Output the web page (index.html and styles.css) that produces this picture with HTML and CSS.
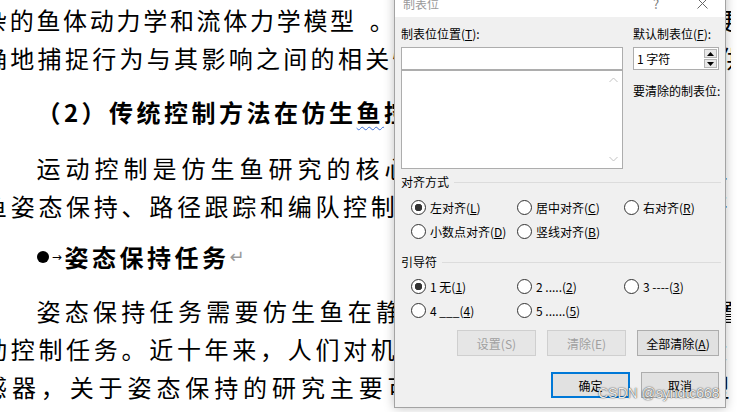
FILE: index.html
```html
<!DOCTYPE html>
<html lang="zh-CN">

<head>
    <meta charset="UTF-8">
    <meta name="viewport" content="width=device-width, initial-scale=1.0">

    <title>制表位</title>
    <link rel="stylesheet" href="styles.css">
</head>

<body>

    <main class="doc">

        <p class="para">
            <span class="line ls-a">杂的鱼体动力学和流体力学模型<span class="stop">。</span>此外，数据驱动的方法能够更准</span>
            <span class="line ls-b">确地捕捉行为与其影响之间的相关性，从而为仿生鱼的设计提供</span>
        </p>

        <h2 class="heading">（2）传统控制方法在仿生<span class="wavy">鱼</span>控制中的应用</h2>

        <p class="para p2">
            <span class="line lead ls-c">运动控制是仿生鱼研究的核心问题之一，主要包括仿生</span>
            <span class="line ls-d">鱼姿态保持、路径跟踪和编队控制等任务。针对这些任务，研究者</span>
        </p>

        <h2 class="heading bullet-line"><span class="bullet"></span><span class="tab">→</span>姿态保持任务<span class="mark">↵</span></h2>

        <p class="para p3">
            <span class="line lead ls-e">姿态保持任务需要仿生鱼在静水或流场中保持期望的位置和姿</span>
            <span class="line ls-d">动控制任务。近十年来，人们对机器鱼姿态保持问题进行了大量研</span>
            <span class="line ls-f">感器，关于姿态保持的研究主要可以分为基于模型和无模型两类方法</span>
        </p>

    </main>

    <!-- tab stops dialog -->
    <div class="dialog">

        <div class="titlebar">
            <span class="title">制表位</span>
            <span class="cap-btn">?</span>
            <span class="cap-btn">
                <svg width="11" height="11" viewBox="0 0 11 11">
                    <path d="M0.5 0.5 L10.5 10.5 M10.5 0.5 L0.5 10.5" stroke="#666" stroke-width="1" fill="none" />
                </svg>
            </span>
        </div>

        <div class="dlg-body">

            <div class="top-row">
                <div class="col-left">
                    <div class="field-label">制表位位置(<u>T</u>):</div>
                    <div class="text-input"></div>
                    <div class="listbox">
                        <div class="list-scroll">
                            <svg width="9" height="6" viewBox="0 0 9 6">
                                <path d="M0.5 5 L4.5 1 L8.5 5" stroke="#c2c2c2" fill="none" />
                            </svg>
                            <svg width="9" height="6" viewBox="0 0 9 6">
                                <path d="M0.5 1 L4.5 5 L8.5 1" stroke="#c2c2c2" fill="none" />
                            </svg>
                        </div>
                    </div>
                </div>

                <div class="col-right">
                    <div class="field-label">默认制表位(<u>F</u>):</div>
                    <div class="spin">
                        <span>1 字符</span>
                        <div class="spin-btns">
                            <span class="spin-btn">
                                <svg width="7" height="4" viewBox="0 0 7 4"><path d="M0 4 L3.5 0 L7 4 Z" fill="#000" /></svg>
                            </span>
                            <span class="spin-btn">
                                <svg width="7" height="4" viewBox="0 0 7 4"><path d="M0 0 L3.5 4 L7 0 Z" fill="#000" /></svg>
                            </span>
                        </div>
                    </div>
                    <div class="clear-label">要清除的制表位:</div>
                </div>
            </div>

            <div class="group">
                <div class="group-head">对齐方式</div>
                <div class="radio-grid">
                    <span class="radio on"><span>左对齐(<u>L</u>)</span></span>
                    <span class="radio"><span>居中对齐(<u>C</u>)</span></span>
                    <span class="radio"><span>右对齐(<u>R</u>)</span></span>
                    <span class="radio"><span>小数点对齐(<u>D</u>)</span></span>
                    <span class="radio"><span>竖线对齐(<u>B</u>)</span></span>
                </div>
            </div>

            <div class="group group-leader">
                <div class="group-head">引导符</div>
                <div class="radio-grid">
                    <span class="radio on"><span>1 无(<u>1</u>)</span></span>
                    <span class="radio"><span>2 .....(<u>2</u>)</span></span>
                    <span class="radio"><span>3 ----(<u>3</u>)</span></span>
                    <span class="radio"><span>4 ___(<u>4</u>)</span></span>
                    <span class="radio"><span>5 ......(<u>5</u>)</span></span>
                </div>
            </div>

            <div class="btn-row">
                <button class="btn" disabled>设置(S)</button>
                <button class="btn" disabled>清除(E)</button>
                <button class="btn wide">全部清除(<u>A</u>)</button>
            </div>

            <div class="btn-row btn-row2">
                <button class="btn default">确定</button>
                <button class="btn cancel">取消</button>
            </div>

        </div>
    </div>

    <div class="watermark">CSDN @syndtc668</div>

</body>

</html>
```

FILE: styles.css
```css
* {
    margin: 0;
    padding: 0;
    box-sizing: border-box;
}

body {
    width: 737px;
    height: 412px;
    overflow: hidden;
    position: relative;
    background-color: #fff;
    font-family: "Noto Sans CJK SC", sans-serif;
}

/* document behind the dialog */
.doc {
    width: 748px;
    overflow: hidden;
    margin-left: -17px;
    padding-top: 1px;
    font-size: 24px;
    line-height: 38px;
    color: #000;
    white-space: nowrap;
}

.doc .line {
    display: block;
}

.doc .lead {
    padding-left: 53.4px;
}

/* justified lines: each line gets its own spacing */
.ls-a { letter-spacing: 2.7px; }
.ls-b { letter-spacing: 3.3px; }
.ls-c { letter-spacing: 5px; }
.ls-d { letter-spacing: 3.7px; }
.ls-e { letter-spacing: 4.3px; }
.ls-f { letter-spacing: 4.9px; }

.stop {
    padding-left: 13px;
}

.doc .heading {
    margin-top: 16px;
    padding-left: 53.4px;
    font-size: 24px;
    font-weight: 700;
    line-height: 38px;
    letter-spacing: 3.5px;
}

.doc .p2 {
    margin-top: 18px;
}

.doc .bullet-line {
    margin-top: 13px;
    display: flex;
    align-items: center;
}

.doc .p3 {
    margin-top: 16px;
}

.wavy {
    text-decoration: underline wavy #3b6fd8;
    text-decoration-thickness: 1px;
    text-underline-offset: 4px;
}

.bullet {
    width: 12px;
    height: 12px;
    margin-left: 1px;
    border-radius: 50%;
    background-color: #000;
}

.tab {
    width: 15px;
    font-family: "DejaVu Sans", sans-serif;
    font-size: 12px;
    font-weight: 400;
    letter-spacing: 0;
    text-align: center;
}

.mark {
    font-family: "DejaVu Sans", sans-serif;
    font-size: 18px;
    font-weight: 400;
    color: #9a9a9a;
}

/* dialog */
.dialog {
    position: absolute;
    left: 394px;
    top: -12px;
    width: 332px;
    background-color: #f0f0f0;
    border: 1px solid #a3a3a3;
    box-shadow: 0 0 10px rgba(0, 0, 0, 0.25);
    font-size: 12px;
    color: #000;
}

.titlebar {
    height: 28px;
    background-color: #fff;
    display: flex;
    align-items: center;
}

.title {
    flex: 1;
    padding-left: 8px;
    color: #999;
}

.cap-btn {
    width: 46px;
    height: 28px;
    display: flex;
    align-items: center;
    justify-content: center;
    color: #777;
    font-size: 13px;
}

.dlg-body {
    padding: 9px 6px 9px 6px;
}

.top-row {
    display: flex;
    gap: 10px;
}

.col-left {
    width: 222px;
}

.col-right {
    width: 86px;
    white-space: nowrap;
}

.field-label {
    line-height: 16px;
    margin-bottom: 5px;
}

.text-input {
    height: 23px;
    background-color: #fff;
    border: 1px solid #adadad;
}

.listbox {
    height: 99px;
    background-color: #fff;
    border: 1px solid #adadad;
    display: flex;
    justify-content: flex-end;
}

.list-scroll {
    width: 17px;
    padding: 6px 0;
    display: flex;
    flex-direction: column;
    justify-content: space-between;
    align-items: center;
}

.spin {
    height: 23px;
    background-color: #fff;
    border: 1px solid #adadad;
    display: flex;
    align-items: center;
    justify-content: space-between;
    padding-left: 3px;
}

.spin-btns {
    width: 15px;
    height: 100%;
    display: flex;
    flex-direction: column;
    gap: 1px;
    padding: 1px;
}

.spin-btn {
    flex: 1;
    display: flex;
    align-items: center;
    justify-content: center;
    background-color: #e8e8e8;
    border: 1px solid #b5b5b5;
}

.clear-label {
    margin-top: 13px;
    line-height: 16px;
}

.group {
    margin-top: 5px;
}

.group-leader {
    margin-top: 11px;
}

.group-head {
    display: flex;
    align-items: center;
    gap: 5px;
    line-height: 16px;
    margin-right: -2px;
}

.group-head::after {
    content: "";
    flex: 1;
    border-top: 1px solid #dcdcdc;
}

.radio-grid {
    display: grid;
    grid-template-columns: 106px 107px auto;
    grid-auto-rows: 24px;
    padding-left: 10px;
    margin-top: 5px;
}

.group-leader .radio-grid {
    margin-top: 4px;
}

.radio {
    display: flex;
    align-items: center;
    gap: 4px;
    white-space: nowrap;
}

.radio::before {
    content: "";
    flex: none;
    width: 13px;
    height: 13px;
    border: 1px solid #333;
    border-radius: 50%;
    background-color: #fff;
}

.radio.on::before {
    background: radial-gradient(circle, #333 0 3.5px, #fff 4px);
}

.btn-row {
    margin-top: 8px;
    display: flex;
    justify-content: flex-end;
    gap: 11px;
}

.btn-row2 {
    margin-top: 16px;
}

.btn {
    width: 79px;
    height: 26px;
    font-family: "Noto Sans CJK SC", sans-serif;
    font-size: 12px;
    color: #000;
    background-color: #e1e1e1;
    border: 1px solid #adadad;
}

.btn:disabled {
    color: #a0a0a0;
    background-color: #e6e6e6;
    border-color: #cfcfcf;
}

.btn.wide {
    width: 82px;
}

.btn.cancel {
    width: 78px;
}

.btn.default {
    border: 1px solid #0078d7;
    box-shadow: inset 0 0 0 1px #0078d7;
}

.watermark {
    position: absolute;
    left: 598px;
    top: 385px;
    font-family: "Liberation Sans", sans-serif;
    font-size: 14px;
    color: rgba(255, 255, 255, 0.92);
    text-shadow: 0 0 1px rgba(0, 0, 0, 0.8), 0 0 2px rgba(0, 0, 0, 0.4);
}
```
